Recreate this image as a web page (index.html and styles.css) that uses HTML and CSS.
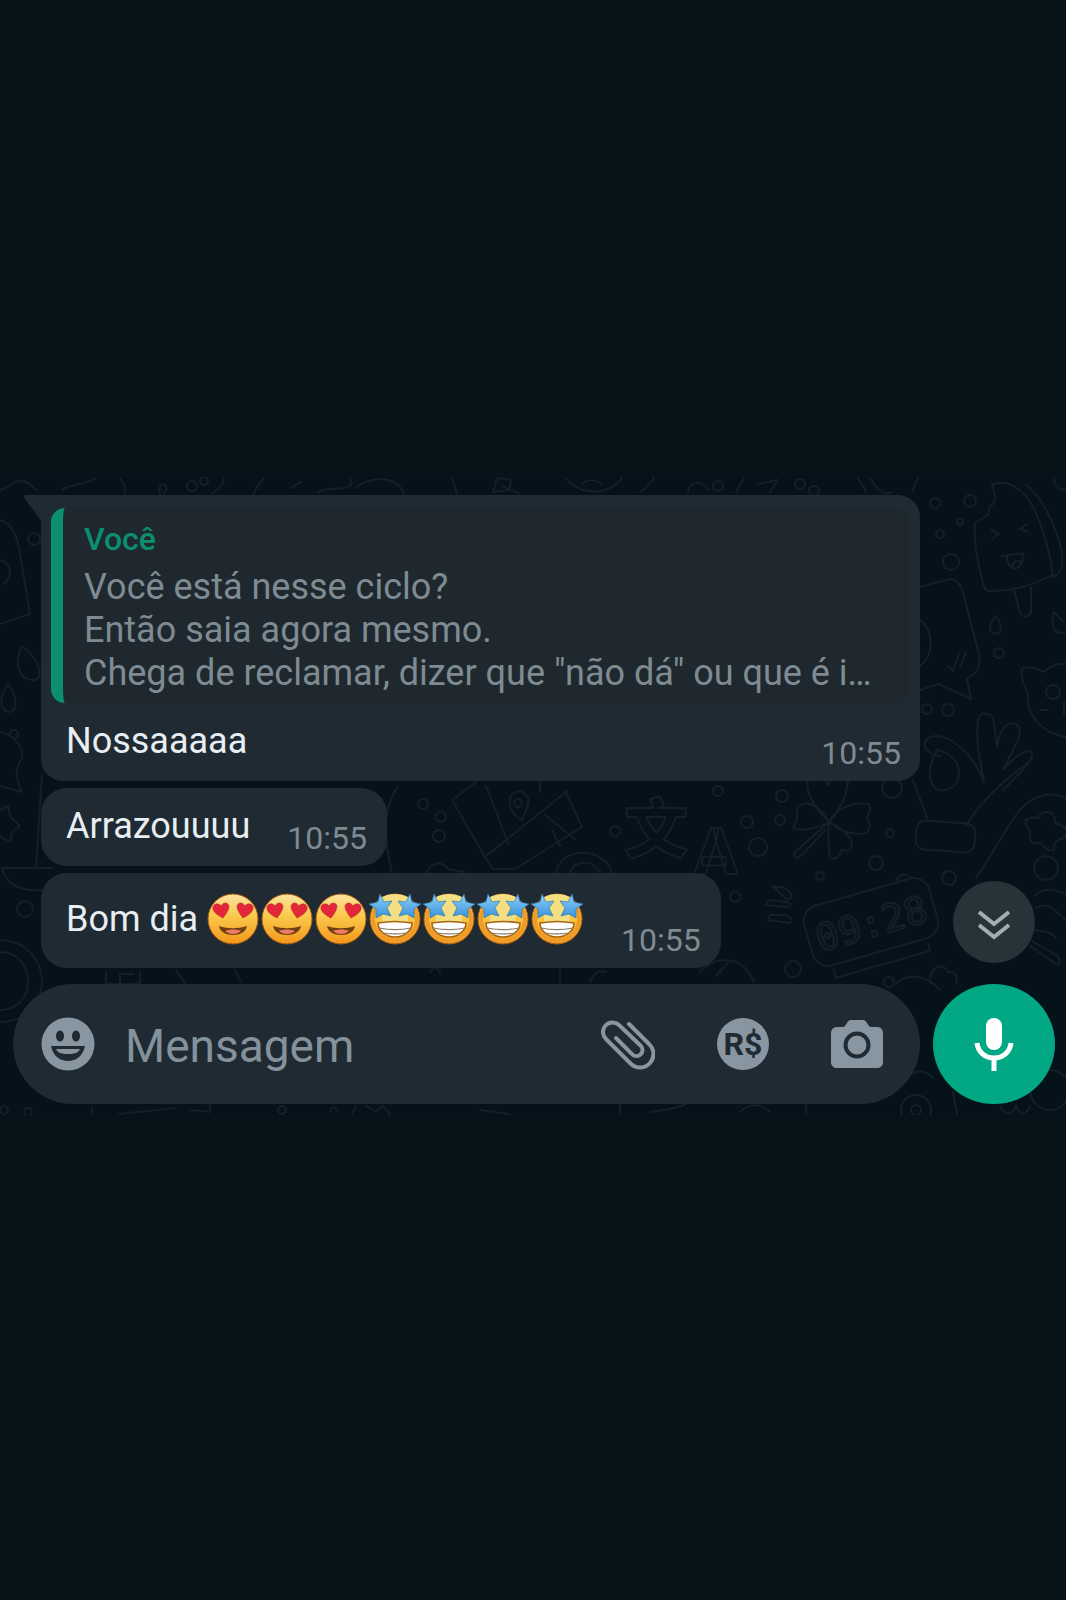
FILE: index.html
```html
<!DOCTYPE html>
<html lang="pt-BR">
<head>
<meta charset="utf-8">
<meta name="viewport" content="width=device-width, initial-scale=1">
<title>Conversa</title>
<link rel="stylesheet" href="styles.css">
</head>
<body>
<svg class="symbols" aria-hidden="true">
  <defs>
    <linearGradient id="face" x1="0" y1="0" x2="0" y2="1">
      <stop offset="0" stop-color="#fbe3a0"/><stop offset=".45" stop-color="#fbc84a"/><stop offset="1" stop-color="#f2961a"/>
    </linearGradient>
    <linearGradient id="star" x1="0" y1="0" x2="0" y2="1">
      <stop offset="0" stop-color="#8fd0fb"/><stop offset="1" stop-color="#3592dc"/>
    </linearGradient>
    <symbol id="heart-eyes" viewBox="0 0 54 54">
      <circle cx="27" cy="27" r="25" fill="url(#face)" stroke="#a85c12" stroke-width="1"/>
      <g fill="#e3263a" stroke="#b3301c" stroke-width=".6">
        <path d="M17 26C11 23 6 19 7 15c1-4 6-4 8-1 2-4 7-4 8 0 0 4-3 8-6 12z"/>
        <path d="M37 26c6-3 11-7 10-11-1-4-6-4-8-1-2-4-7-4-8 0 0 4 3 8 6 12z"/>
      </g>
      <path d="M13 34c9 3 19 3 28 0-1 6-7 9-14 9s-13-3-14-9z" fill="#71400f"/>
      <path d="M19 39c5-2 11-2 16 0-5 4-11 4-16 0z" fill="#ee7c67"/>
    </symbol>
    <symbol id="star-eyes" viewBox="0 0 54 54">
      <circle cx="27" cy="27" r="25" fill="url(#face)" stroke="#a85c12" stroke-width="1"/>
      <circle cx="27" cy="27" r="22" fill="none" stroke="#ee9b28" stroke-width="4"/>
      <path d="M14 5c8-4 18-4 26 0v25H14z" fill="#f3df82"/>
      <path d="M10 31c11-2 23-2 34 0 0 8-8 14-17 14s-17-6-17-14z" fill="#fff" stroke="#a76410" stroke-width="1.6"/>
      <path d="M11 36c10 2 22 2 32 0M15 41c7 1 17 1 24 0" fill="none" stroke="#8b7a63" stroke-width="1.2"/>
      <g fill="url(#star)" stroke="#3179a8" stroke-width=".7">
        <path d="M12 2l4 8 8-1-5 7 4 8-8-2-7 4v-9l-7-5 9-2z"/>
        <path d="M42 2l-4 8-8-1 5 7-4 8 8-2 7 4v-9l7-5-9-2z"/>
      </g>
    </symbol>
  </defs>
</svg>

<main class="page">
  <section class="chat" aria-label="Conversa">
    <svg class="wallpaper" viewBox="0 477 1066 638" preserveAspectRatio="xMidYMid slice" aria-hidden="true">
      <g class="doodles">
        <!-- top edge -->
        <path d="M0 490c10-2 14-12 26-8 6 2 8 6 11 9M62 490c8-7 22-4 34-12M120 478c4 6 6 10 5 16M160 494c-2-8 2-12 6-8 2 4-2 6-2 8M212 494c6-4 12-10 12-16M254 494c2-8 6-12 10-16M292 488c4-4 6-5 10-6M318 492c12-6 26 0 34-8l-2-6M356 488c8-8 22-10 32-8 10 2 14 8 16 14M452 478l5 16M493 492l4-14 14 2-2 10zM502 486l18 8M566 478c12 16 40 20 56 0M582 484c6-6 14-4 20 0M640 492c6-4 10-8 14-14M688 492c2-12 16-12 20-2M736 492l8-14M758 484l20-4-8 12M858 478l8 14M870 478c8 14 16 18 22 14M918 478l-6 14M1054 478c0 8 6 12 12 12"/>
        <circle cx="192" cy="486" r="5"/><circle cx="204" cy="481" r="4"/><circle cx="718" cy="486" r="5"/><circle cx="800" cy="484" r="5"/><circle cx="814" cy="491" r="5"/>
        <!-- ice lolly -->
        <path d="M992 485c14-7 32 4 41 22 9 18 14 36 18 55 1 8 2 10 1 13-18 10-42 17-63 16-4 0-6-6-7-12-4-16-9-40-7-56l14-9c-3-6 4-8 5-12 3-6-1-10-2-17zM1026 485c20 14 38 60 36 78 0 8-4 12-10 14M1014 589l6 24c4 6 10 4 11-2v-24M991 530l8 4-7 5M1027 524l-7 5 8 3M1002 556l22-3M1007 556c0 16 16 18 16-2M1012 566c2-6 8-6 9-2"/>
        <!-- sticker sheet -->
        <path d="M920 587l30-8c6 1 10 5 12 10l17 65c1 8 0 14-3 18l-9 7 4 20-32-15-19 6M920 620c14 10 14 36 0 46M948 666l5 5 6-18M960 668l6-16"/>
        <path d="M996 616c-8 8-8 16-1 18 7-1 8-8 1-18zM1054 612c-4 14 0 24 12 20M1054 612l10 10"/>
        <circle cx="935" cy="503" r="5"/><circle cx="970" cy="501" r="6"/><circle cx="940" cy="534" r="4"/><circle cx="960" cy="522" r="3"/><circle cx="951" cy="562" r="8"/><circle cx="999" cy="653" r="5"/><circle cx="927" cy="709" r="5"/><circle cx="948" cy="710" r="6"/>
        <!-- pig -->
        <path d="M1066 664c-8-1-16 2-22 8-8-4-16-6-22-3-2 8 2 16 6 24-2 18 8 38 38 44"/><circle cx="1053" cy="692" r="7"/><path d="M1040 710h8M1064 702v12"/>
        <!-- hand -->
        <path d="M928 738c16-8 44 12 56 44-3-18-9-40-6-62 2-10 14-8 16 2l3 24c2-14 10-26 18-22 10 4 2 18-2 26l-10 20c8-10 22-22 28-18 6 4-8 18-28 38M928 738c-12 10 10 20 12 18M937 750c-8 14-12 34 2 40 16 2 24-12 18-26-4-8-10-12-20-14M913 780l15 40M966 825c18-26 36-44 62-62"/>
        <rect x="916" y="822" width="59" height="29" rx="9" transform="rotate(4 945 836)"/>
        <!-- clover -->
        <path d="M829 822c-14-14-24-28-21-42 8-10 18-4 20 6 4-10 16-12 20-4-2 16-8 28-19 40zM829 822c-10-16-22-24-32-14 0 8 2 8-4 20 8 4 26 0 36-6zM829 822c8-14 22-20 40-18 4 10-4 12-1 16 4 6 2 14-8 14-10 0-22-4-31-12zM829 822c-2 12 0 26 1 36 8 2 10-4 12-8 6 2 10 0 10-8-4-10-14-16-23-20zM829 822l-34 30c-4 6 2 8 8 2l22-24"/>
        <circle cx="782" cy="796" r="6"/><circle cx="747" cy="822" r="6"/><circle cx="780" cy="820" r="5"/><circle cx="758" cy="847" r="9"/><circle cx="892" cy="788" r="10"/><circle cx="890" cy="833" r="4"/><circle cx="876" cy="863" r="7"/><circle cx="820" cy="876" r="4"/><circle cx="949" cy="878" r="7"/><circle cx="793" cy="969" r="8"/><circle cx="735" cy="897" r="5"/><circle cx="718" cy="791" r="5"/><circle cx="615" cy="831" r="5"/><circle cx="423" cy="804" r="5"/><circle cx="441" cy="817" r="5"/><circle cx="439" cy="836" r="6"/>
        <!-- alarm clock -->
        <g transform="rotate(-16 871 922)"><rect x="806" y="891" width="130" height="62" rx="16"/><path d="M822 957v9h98v-8M906 890c4-6 12-6 16 0"/><text x="871" y="937" class="clock-digits">09:28</text></g>
        <path d="M773 886l14 14c6-2 6-6-2-12zM766 905l20 2c6 0 6-4 0-5l-18-2zM768 920l22 3c2-4 0-8-6-8h-14z"/>
        <!-- game pad -->
        <path d="M976 878c14-20 24-40 38-60 14-22 34-28 52-20M1046 812c10-1 8 8 10 12 8 0 14 8 8 14-8 2-10 4-10 12-8 2-10-4-14-8-6 4-12 0-10-10 0-4-6-6-4-12 4-4 8-2 12-2 2-4 4-6 8-6z"/><circle cx="1046" cy="868" r="12"/>
        <path d="M1034 896c10-10 22-6 32-2M1036 908c16-8 22 8 30 12M1034 930c8 2 16 0 22 8M1030 946l26 18c6 2 4-8-2-10l-24-14"/>
        <!-- map -->
        <path d="M476 782l-24 18 33 57 82-66M485 857l8 12h22l67-42-17-37M545 815l30 24M552 830l8 16M486 786l12 30 10 28M540 782v10M510 800c0-10 14-12 18-2 2 10-4 14-6 22-8-4-14-12-12-20z"/><circle cx="518" cy="803" r="4"/>
        <text x="656" y="852" class="glyph-cjk">文</text><text x="716" y="874" class="glyph-latin">A</text>
        <path d="M426 873c6-12 16-12 22-4l16 3M556 873c4-26 48-28 56 0M570 873c4-14 24-14 30 0M398 786c-14 20-16 46-6 86"/>
        <!-- left edge -->
        <path d="M0 520c14 4 18 20 20 34l10 60-30 10M0 560c10 2 14 16 4 24M22 646c-8 16-4 34 10 34s8-20-10-34M8 684c-10 14-8 26 0 28 10 0 10-14 0-28M0 732c12 2 24 14 22 26-4 8-10 12 0 34l-22-6M42 774l-6 94M0 810l8-4 2 10 10 10-8 6-2 10-10-6M2 868h50M2 868c4 18 20 24 44 22M0 940c24 0 42 18 42 42s-18 40-42 40M0 952c18 0 28 14 28 30s-12 28-28 28"/>
        <circle cx="34" cy="539" r="6"/><circle cx="25" cy="909" r="8"/><circle cx="14" cy="734" r="4"/>
        <!-- gaps and bottom edge -->
        <path d="M106 972v12h34v-12M120 983v-9h14M176 970l10 14M235 970l6 12M430 972c4-6 8-6 10 2M560 982v-12M590 982c4-10 10-12 16-10M700 972c16-18 44-16 54 10M716 976l14-16M896 984c12-12 32-8 44 6M930 978c2-14 16-14 18-6 8-2 10 6 8 12M92 1108v6M118 1114l58-6M190 1110l20 2v-8M330 1112c2-6 6-6 8 0M352 1114l4-8M366 1106l10 6 6-6 8 8M480 1110l30 4M620 1104v10M650 1112c12-2 24-2 36-8M740 1112c8-8 20-10 30 0M806 1104v10M905 1080c8-10 20-12 28-2M953 1092l4 22M1000 1106c6 10 12 10 16 0 4 10 10 10 14 0"/>
        <circle cx="4" cy="1110" r="4"/><circle cx="28" cy="1112" r="4"/><circle cx="282" cy="1110" r="4"/><circle cx="889" cy="982" r="5"/><circle cx="916" cy="1110" r="15"/><circle cx="916" cy="1110" r="5"/><circle cx="1050" cy="1090" r="20"/>
      </g>
    </svg>

    <div class="messages">
      <article class="bubble bubble--reply">
        <svg class="tail" viewBox="0 0 18 28" aria-hidden="true"><path d="M18 0H3C0 0-1 2 1 4l17 23z"/></svg>
        <blockquote class="quote">
          <cite class="quote-author">Você</cite>
          <p class="quote-text">Você está nesse ciclo?<br>Então saia agora mesmo.<br>Chega de reclamar, dizer que "não dá" ou que é i…</p>
        </blockquote>
        <div class="line line--reply"><p class="text">Nossaaaaa</p><time class="time">10:55</time></div>
      </article>
      <article class="bubble">
        <div class="line"><p class="text">Arrazouuuu</p><time class="time">10:55</time></div>
      </article>
      <article class="bubble">
        <div class="line line--emoji">
          <p class="text text--emoji">Bom dia
            <span class="emojis" role="img" aria-label="😍😍😍🤩🤩🤩🤩"><svg class="emoji"><use href="#heart-eyes"/></svg><svg class="emoji"><use href="#heart-eyes"/></svg><svg class="emoji"><use href="#heart-eyes"/></svg><svg class="emoji"><use href="#star-eyes"/></svg><svg class="emoji"><use href="#star-eyes"/></svg><svg class="emoji"><use href="#star-eyes"/></svg><svg class="emoji"><use href="#star-eyes"/></svg></span>
          </p><time class="time">10:55</time>
        </div>
      </article>
    </div>

    <button class="scroll-down" type="button" aria-label="Ir para o fim">
      <svg width="32" height="30" viewBox="0 0 32 30"><path d="M1 2l15 12L31 2M1 15l15 12 15-12"/></svg>
    </button>

    <form class="composer">
      <button class="icon-button" type="button" aria-label="Emojis">
        <svg width="54" height="54" viewBox="0 0 54 54"><circle cx="27" cy="27" r="26.5" fill="currentColor"/><g class="cut"><ellipse cx="19" cy="19" rx="4" ry="5.5"/><ellipse cx="35" cy="19" rx="4" ry="5.5"/><path d="M10 29h34c-2 10-9 15-17 15s-15-5-17-15z"/></g><path d="M15 32h24c-1 3-5 5-12 5s-11-2-12-5z" fill="currentColor"/></svg>
      </button>
      <input class="field" type="text" placeholder="Mensagem" aria-label="Mensagem">
      <button class="icon-button" type="button" aria-label="Anexar">
        <svg width="54" height="52" viewBox="1 0 54 52"><path class="clip" d="M29 6l20 20a13 13 0 0 1-18 20L6 21A9.500 9.500 0 0 1 19 7l22 21a6 6 0 0 1-9 8L16 20"/></svg>
      </button>
      <button class="icon-button money" type="button" aria-label="Pagamento">R$</button>
      <button class="icon-button" type="button" aria-label="Câmera">
        <svg width="52" height="50" viewBox="0 0 52 50"><path fill="currentColor" d="M6 8h6c3 0 4-7 8-7h12c4 0 5 7 8 7h6c4 0 6 3 6 6v29c0 4-3 6-6 6H6c-3 0-6-2-6-6V14c0-3 2-6 6-6z"/><circle class="lens" cx="26" cy="26" r="11.500"/></svg>
      </button>
    </form>

    <button class="mic" type="button" aria-label="Gravar áudio">
      <svg width="40" height="56" viewBox="0 0 40 56"><rect x="12" y="2" width="16" height="32" rx="8" fill="currentColor"/><path d="M3 27c1 9 8 15 17 15s16-6 17-15M20 42v13"/></svg>
    </button>
  </section>
</main>
</body>
</html>
```
FILE: styles.css
```css
* { box-sizing: border-box; }

body {
  margin: 0;
  background: #071319;
  color: #e8eef2;
  font-family: Roboto, "Noto Sans", sans-serif;
}

p, blockquote { margin: 0; }

button {
  padding: 0;
  border: 0;
  font: inherit;
  cursor: pointer;
}

svg { display: block; }

.symbols { position: absolute; width: 0; height: 0; }

.page {
  display: flex;
  flex-direction: column;
  justify-content: center;
  min-height: 100vh;
  padding-bottom: 8px;
}

.chat {
  position: relative;
  display: grid;
  grid-template-columns: minmax(0, 1fr) 122px;
  gap: 16px 13px;
  padding: 18px 11px 11px 13px;
  background: #06121a;
}

.wallpaper {
  position: absolute;
  inset: 0;
  width: 100%;
  height: 100%;
}

.doodles {
  fill: none;
  stroke: #132027;
  stroke-width: 2;
  stroke-linecap: round;
  stroke-linejoin: round;
}

.clock-digits {
  font: 38px "DejaVu Sans Mono", monospace;
  text-anchor: middle;
}

.glyph-cjk { font: 900 64px "Noto Sans CJK SC", sans-serif; text-anchor: middle; }
.glyph-latin { font: 900 64px Roboto, sans-serif; text-anchor: middle; }

.messages {
  position: relative;
  display: flex;
  flex-direction: column;
  align-items: flex-start;
  gap: 7px;
  padding-left: 28px;
}

.bubble {
  position: relative;
  max-width: 100%;
  border-radius: 26px;
  background: #1f2a32;
}

.bubble--reply {
  width: 100%;
  padding: 13px 11px 0 10px;
  border-radius: 0 22px 22px 22px;
}

.tail {
  position: absolute;
  top: 0;
  left: -17px;
  width: 18px;
  height: 28px;
  fill: #1f2a32;
}

.quote {
  padding: 11px 20px 8px 21px;
  border-left: 12px solid #0b8f70;
  border-radius: 14px;
  background: #1e282e;
}

.quote-author {
  display: block;
  margin-bottom: 7px;
  color: #0b8f70;
  font-size: 32px;
  font-style: normal;
  font-weight: 500;
  line-height: 40px;
}

.quote-text {
  overflow: hidden;
  color: #7f8b92;
  font-size: 36px;
  line-height: 43px;
  white-space: nowrap;
  text-overflow: ellipsis;
}

.line {
  display: flex;
  align-items: flex-end;
  gap: 37px;
  min-height: 78px;
  padding: 0 20px 12px 25px;
}

.line--reply {
  justify-content: space-between;
  padding: 0 8px 12px 15px;
}

.line--emoji { min-height: 95px; }

.text {
  font-size: 36px;
  line-height: 42px;
  padding-bottom: 7px;
}

.text--emoji {
  display: flex;
  align-items: center;
  gap: 8px;
  padding-bottom: 10px;
}

.emojis { display: flex; }
.emoji { width: 54px; height: 54px; }

.time {
  color: #7f8b92;
  font-size: 32px;
  line-height: 32px;
}

.scroll-down {
  position: relative;
  display: grid;
  place-items: center;
  place-self: end center;
  width: 82px;
  height: 82px;
  margin-bottom: 5px;
  padding-top: 6px;
  border-radius: 50%;
  background: #273239;
}

.scroll-down path {
  fill: none;
  stroke: #a3adb3;
  stroke-width: 4;
}

.composer {
  position: relative;
  display: flex;
  align-items: center;
  gap: 62px;
  min-width: 0;
  padding: 0 37px 0 28px;
  border-radius: 60px;
  background: #1f2a32;
}

.icon-button {
  flex: none;
  background: none;
  color: #8796a1;
}

.icon-button .cut { fill: #1f2a32; }

.clip, .lens {
  fill: none;
  stroke: currentColor;
  stroke-width: 4;
  stroke-linecap: round;
}

.lens { stroke: #1f2a32; }

.money {
  width: 52px;
  height: 52px;
  border-radius: 50%;
  background: #8796a1;
  color: #1f2a32;
  font-size: 32px;
  font-weight: 700;
  line-height: 52px;
}

.field {
  flex: 1;
  min-width: 0;
  margin-left: -32px;
  padding: 3px 0 0;
  border: 0;
  outline: 0;
  background: none;
  color: #e8eef2;
  font: 46px/60px Roboto, "Noto Sans", sans-serif;
}

.field::placeholder { color: #84929c; opacity: 1; }

.mic {
  position: relative;
  display: grid;
  place-items: center;
  width: 122px;
  height: 120px;
  border-radius: 50%;
  background: #02a884;
  color: #fff;
}

.mic path {
  fill: none;
  stroke: currentColor;
  stroke-width: 5;
}
```
